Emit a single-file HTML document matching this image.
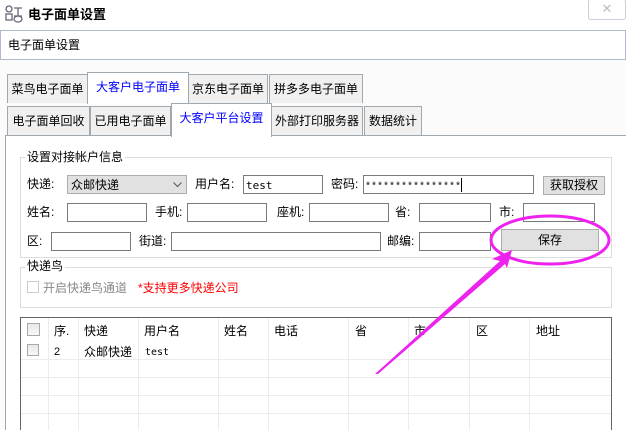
<!DOCTYPE html>
<html><head><meta charset="utf-8"><style>
html{overflow:hidden;height:430px}
body{margin:0;width:626px;height:430px;overflow:hidden;background:#fff;font-family:"Liberation Sans","Noto Sans CJK SC",sans-serif;font-size:12px;color:#000;position:relative}
.a{position:absolute}
.t{position:absolute;line-height:14px;white-space:nowrap}
.tab{position:absolute;background:#f0f0f0;border:1px solid #a0a8b0;border-bottom:none;box-sizing:border-box;text-align:center;line-height:28px;font-size:12px}
.sel{background:#fff;color:#0000ff;z-index:2}
.in{position:absolute;border:1px solid #7a7a7a;background:#fff;box-sizing:border-box;height:19px}
.grp{position:absolute;border:1px solid #dcdcdc;box-sizing:border-box}
.lg{position:absolute;background:#fff;padding:0 2px;line-height:14px}
.btn{position:absolute;background:#e1e1e1;border:1px solid #adadad;box-sizing:border-box;text-align:center}
.cb{position:absolute;width:12px;height:12px;border:1px solid #a8a8a8;box-sizing:border-box;background:linear-gradient(#e8e8e8,#f8f8f8)}
.vl{position:absolute;width:1px;background:#ececec}
.hl{position:absolute;height:1px;background:#ececec;left:21px;width:590px}
</style></head><body>
<svg class="a" style="left:4px;top:5px" width="20" height="18" viewBox="0 0 20 18"><circle cx="5" cy="4" r="3" fill="none" stroke="#667" stroke-width="1.3"/><rect x="2" y="9" width="6" height="6" fill="none" stroke="#667" stroke-width="1.3"/><path d="M10 3h8M14 3v8M10 11h8" stroke="#667" stroke-width="1.3" fill="none"/><ellipse cx="14" cy="14" rx="4" ry="3" fill="none" stroke="#667" stroke-width="1.3"/></svg>
<div class="t" style="left:28px;top:8px;font-weight:bold;font-size:13px">电子面单设置</div>
<div class="a" style="left:588px;top:-1px;width:38px;height:21px;border:1px solid #c8d0dc;border-radius:3px;box-sizing:border-box;background:#fff;color:#bbc;text-align:center;line-height:18px;font-size:13px">✕</div>
<div class="a" style="left:0;top:30px;width:626px;height:30px;border:1px solid #b0b8d0;box-sizing:border-box;background:#fff"></div>
<div class="t" style="left:8px;top:38px">电子面单设置</div>
<div class="a" style="left:0;top:60px;width:626px;height:370px;background:#fbfbfb"></div>

<div class="tab" style="left:7px;top:74px;width:81px;height:29px">菜鸟电子面单</div>
<div class="tab sel" style="left:87px;top:72px;width:102px;height:32px">大客户电子面单</div>
<div class="tab" style="left:188px;top:74px;width:80px;height:29px">京东电子面单</div>
<div class="tab" style="left:269px;top:74px;width:94px;height:29px">拼多多电子面单</div>
<div class="tab" style="left:7px;top:106px;width:83px;height:30px">电子面单回收</div>
<div class="tab" style="left:90px;top:106px;width:81px;height:30px">已用电子面单</div>
<div class="tab sel" style="left:171px;top:103px;width:101px;height:34px">大客户平台设置</div>
<div class="tab" style="left:271px;top:106px;width:92px;height:30px">外部打印服务器</div>
<div class="tab" style="left:364px;top:106px;width:58px;height:30px">数据统计</div>
<div class="a" style="left:5px;top:135px;width:621px;height:295px;border:1px solid #a0a8b0;border-right:none;border-bottom:none;box-sizing:border-box;background:#fff"></div>

<div class="grp" style="left:20px;top:157px;width:592px;height:101px"></div>
<div class="lg" style="left:25px;top:150px">设置对接帐户信息</div>
<div class="t" style="left:27px;top:177px">快递:</div>
<div class="in" style="left:67px;top:175px;width:120px;background:#e1e1e1;border-color:#adadad"></div>
<div class="t" style="left:71px;top:178px">众邮快递</div>
<svg class="a" style="left:173px;top:182px" width="9" height="6"><path d="M0.5 0.5L4.5 4.5L8.5 0.5" stroke="#555" fill="none"/></svg>
<div class="t" style="left:195px;top:177px">用户名:</div>
<div class="in" style="left:243px;top:175px;width:80px"></div>
<div class="t" style="left:246px;top:179px;font-family:'DejaVu Sans Mono',monospace;font-size:11px">test</div>
<div class="t" style="left:331px;top:177px">密码:</div>
<div class="in" style="left:363px;top:175px;width:171px"></div>
<div class="t" style="left:365px;top:181px;font-family:'Liberation Mono',monospace;font-size:10px">****************</div>
<div class="a" style="left:461px;top:178px;width:1px;height:14px;background:#000"></div>
<div class="btn" style="left:543px;top:176px;width:62px;height:19px;line-height:17px">获取授权</div>

<div class="t" style="left:27px;top:205px">姓名:</div><div class="in" style="left:67px;top:203px;width:80px"></div>
<div class="t" style="left:155px;top:205px">手机:</div><div class="in" style="left:187px;top:203px;width:80px"></div>
<div class="t" style="left:277px;top:205px">座机:</div><div class="in" style="left:309px;top:203px;width:80px"></div>
<div class="t" style="left:395px;top:205px">省:</div><div class="in" style="left:419px;top:203px;width:72px"></div>
<div class="t" style="left:499px;top:205px">市:</div><div class="in" style="left:523px;top:203px;width:72px"></div>

<div class="t" style="left:27px;top:234px">区:</div><div class="in" style="left:51px;top:232px;width:80px"></div>
<div class="t" style="left:139px;top:234px">街道:</div><div class="in" style="left:171px;top:232px;width:210px"></div>
<div class="t" style="left:387px;top:234px">邮编:</div><div class="in" style="left:419px;top:232px;width:72px"></div>
<div class="btn" style="left:501px;top:229px;width:98px;height:22px;line-height:20px">保存</div>

<div class="grp" style="left:20px;top:267px;width:592px;height:41px"></div>
<div class="lg" style="left:25px;top:259px">快递鸟</div>
<div class="a" style="left:27px;top:281px;width:12px;height:12px;border:1px solid #ccc;box-sizing:border-box"></div>
<div class="t" style="left:43px;top:281px;color:#888">开启快递鸟通道</div>
<div class="t" style="left:138px;top:281px;color:#f00">*支持更多快递公司</div>

<div class="a" style="left:20px;top:317px;width:592px;height:113px;border:1px solid #646464;border-bottom:none;box-sizing:border-box;background:#fff"></div>
<div class="vl" style="left:48px;top:318px;height:112px"></div>
<div class="vl" style="left:78px;top:318px;height:112px"></div>
<div class="vl" style="left:138px;top:318px;height:112px"></div>
<div class="vl" style="left:218px;top:318px;height:112px"></div>
<div class="vl" style="left:268px;top:318px;height:112px"></div>
<div class="vl" style="left:348px;top:318px;height:112px"></div>
<div class="vl" style="left:408px;top:318px;height:112px"></div>
<div class="vl" style="left:469px;top:318px;height:112px"></div>
<div class="vl" style="left:529px;top:318px;height:112px"></div>
<div class="hl" style="top:359px"></div><div class="hl" style="top:377px"></div><div class="hl" style="top:395px"></div><div class="hl" style="top:413px"></div>
<div class="cb" style="left:27px;top:323px;width:13px;height:13px"></div>
<div class="t" style="left:54px;top:324px">序.</div>
<div class="t" style="left:84px;top:324px">快递</div>
<div class="t" style="left:144px;top:324px">用户名</div>
<div class="t" style="left:224px;top:324px">姓名</div>
<div class="t" style="left:274px;top:324px">电话</div>
<div class="t" style="left:355px;top:324px">省</div>
<div class="t" style="left:414px;top:324px">市</div>
<div class="t" style="left:476px;top:324px">区</div>
<div class="t" style="left:536px;top:324px">地址</div>
<div class="cb" style="left:27px;top:344px"></div>
<div class="t" style="left:54px;top:345px;font-size:11px">2</div>
<div class="t" style="left:84px;top:345px">众邮快递</div>
<div class="t" style="left:145px;top:346px;font-family:'DejaVu Sans Mono',monospace;font-size:10px">test</div>

<svg class="a" style="left:0;top:0" width="626" height="430">
<ellipse cx="550" cy="240" rx="59" ry="24" fill="none" stroke="#ee22ee" stroke-width="3"/>
<polygon points="512,250 492,259 500,261 375,374 378,374 505,264 507,268" fill="#ee22ee"/>
</svg>
</body></html>
